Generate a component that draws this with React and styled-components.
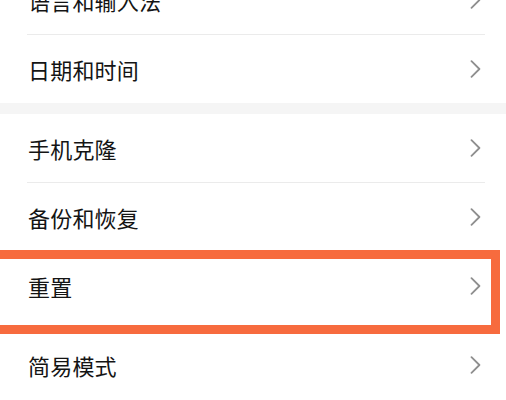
import React from "react";
import styled, { createGlobalStyle } from "styled-components";

const GlobalStyle = createGlobalStyle`
  html, body {
    margin: 0;
    padding: 0;
    background: #ffffff;
    overflow: hidden;
  }
  body {
    font-family: "Noto Sans CJK SC", "Noto Sans", sans-serif;
  }
`;

const Page = styled.div`
  width: 506px;
  height: 400px;
  overflow: hidden;
  background: #ffffff;
`;

const List = styled.div`
  display: flex;
  flex-direction: column;
  margin-top: -34px;
`;

const Group = styled.div`
  display: flex;
  flex-direction: column;
  background: #ffffff;
`;

const GroupGap = styled.div`
  height: 11px;
  background: #f5f5f5;
`;

const Row = styled.div`
  position: relative;
  display: flex;
  align-items: center;
  justify-content: space-between;
  height: ${(p) => p.$height || 68}px;
  padding: 0 25px 0 28px;
  box-sizing: border-box;
`;

const Label = styled.span`
  font-size: 22px;
  line-height: 1;
  color: #141414;
  letter-spacing: 0.2px;
`;

const Divider = styled.div`
  height: 1px;
  margin: 0 21px 0 27px;
  background: #ebebeb;
`;

const Highlight = styled.div`
  position: absolute;
  top: -2px;
  bottom: -14px;
  left: -20px;
  right: 6px;
  border: 9px solid #f76b3e;
  pointer-events: none;
`;

const Chevron = () => (
  <svg width="11" height="18" viewBox="0 0 11 18" fill="none">
    <path d="M1.5 1.2 L9.4 9 L1.5 16.8" stroke="#8e8e8e" strokeWidth="1.8" strokeLinecap="round" strokeLinejoin="round" />
  </svg>
);

const Item = ({ label, height, highlighted }) => (
  <Row $height={height}>
    <Label>{label}</Label>
    <Chevron />
    {highlighted && <Highlight />}
  </Row>
);

const groups = [
  [{ label: "语言和输入法" }, { label: "日期和时间" }],
  [
    { label: "手机克隆" },
    { label: "备份和恢复" },
    { label: "重置", highlighted: true, noDivider: true },
    { label: "简易模式", height: 90 },
  ],
];

export default function App() {
  return (
    <Page>
      <GlobalStyle />
      <List>
        {groups.map((items, gi) => (
          <React.Fragment key={gi}>
            {gi > 0 && <GroupGap />}
            <Group>
              {items.map((item, i) => (
                <React.Fragment key={item.label}>
                  <Item {...item} />
                  {i < items.length - 1 && !item.noDivider && <Divider />}
                </React.Fragment>
              ))}
            </Group>
          </React.Fragment>
        ))}
      </List>
    </Page>
  );
}
